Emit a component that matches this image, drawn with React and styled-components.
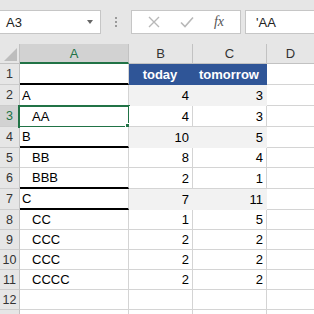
import React from "react";
import styled, { createGlobalStyle } from "styled-components";

const Global = createGlobalStyle`
  body {
    margin: 0;
    background: #ffffff;
    font-family: "Liberation Sans", Arial, sans-serif;
  }
`;

const Page = styled.div`
  width: 314px;
  height: 314px;
  overflow: hidden;
`;

// formula bar at the top
const Toolbar = styled.div`
  height: 44px;
  background: #e6e6e6;
  display: flex;
  align-items: flex-start;
  padding-top: 10px;
  box-sizing: border-box;
`;

const Box = styled.div`
  height: 24px;
  box-sizing: border-box;
  background: #ffffff;
  border: 1px solid #c6c6c6;
  display: flex;
  align-items: center;
`;

const NameBox = styled(Box)`
  width: 101px;
  border-left: none;
  padding-left: 6px;
  font-size: 13px;
  color: #222;
  justify-content: space-between;
  padding-right: 7px;
`;

const Caret = styled.span`
  width: 0;
  height: 0;
  border-left: 3.5px solid transparent;
  border-right: 3.5px solid transparent;
  border-top: 4px solid #666;
`;

const Dots = styled.div`
  width: 30px;
  height: 24px;
  display: flex;
  flex-direction: column;
  align-items: center;
  justify-content: center;
  gap: 2px;
  & span {
    width: 2px;
    height: 2px;
    background: #9a9a9a;
  }
`;

const Buttons = styled(Box)`
  width: 110px;
  justify-content: space-around;
  padding: 0 6px;
  color: #b8b8b8;
`;

const Fx = styled.span`
  font-family: "Liberation Serif", "Times New Roman", serif;
  font-style: italic;
  font-size: 14px;
  color: #555;
`;

const Formula = styled(Box)`
  margin-left: 4px;
  flex: 1;
  border-right: none;
  padding-left: 10px;
  font-size: 13px;
  color: #222;
`;

// sheet grid
const Grid = styled.div`
  display: grid;
  grid-template-columns: 20px 109px 64px 74px 48px;
`;

const HeadCell = styled.div`
  height: 20px;
  box-sizing: border-box;
  background: ${(p) => (p.$active ? "#d2d2d2" : "#e6e6e6")};
  border-right: 1px solid #c2c2c2;
  border-bottom: ${(p) => (p.$active ? "2px solid #217346" : "1px solid #c2c2c2")};
  display: flex;
  align-items: center;
  justify-content: center;
  font-size: 13px;
  color: ${(p) => (p.$active ? "#217346" : "#333")};
  padding-top: ${(p) => (p.$active ? "1px" : "0")};
`;

const Corner = styled(HeadCell)`
  position: relative;
  &::after {
    content: "";
    position: absolute;
    right: 2px;
    bottom: 2px;
    border-left: 13px solid transparent;
    border-bottom: 13px solid #bdbdbd;
  }
`;

const RowNum = styled.div`
  height: ${(p) => p.$h}px;
  box-sizing: border-box;
  background: ${(p) => (p.$active ? "#d2d2d2" : "#e6e6e6")};
  border-right: 1px solid #c2c2c2;
  border-bottom: 1px solid #cdcdcd;
  display: flex;
  align-items: center;
  justify-content: center;
  font-size: 12.5px;
  color: ${(p) => (p.$active ? "#217346" : "#333")};
`;

const Cell = styled.div`
  position: relative;
  height: ${(p) => p.$h}px;
  box-sizing: border-box;
  background: ${(p) => (p.$blue ? "#2f5597" : p.$shade ? "#f2f2f2" : "#ffffff")};
  border-right: 1px solid ${(p) => (p.$blue ? "#2f5597" : p.$shade ? "#f2f2f2" : "#d4d4d4")};
  border-bottom: ${(p) => (p.$thick ? "2px solid #000" : `1px solid ${p.$blue ? "#2f5597" : p.$shade ? "#f2f2f2" : "#d4d4d4"}`)};
  display: flex;
  align-items: center;
  justify-content: ${(p) => (p.$num ? "flex-end" : p.$blue ? "center" : "flex-start")};
  padding: 0 3px 0 ${(p) => (p.$indent ? 12 : 2)}px;
  font-size: 13px;
  font-weight: ${(p) => (p.$blue ? 700 : 400)};
  color: ${(p) => (p.$blue ? "#ffffff" : "#000")};
  white-space: nowrap;
  overflow: visible;
`;

const Selection = styled.div`
  position: absolute;
  left: -2px;
  top: -1px;
  right: -2px;
  bottom: -2px;
  border: 2px solid #217346;
  pointer-events: none;
  &::after {
    content: "";
    position: absolute;
    right: -4px;
    bottom: -4px;
    width: 5px;
    height: 5px;
    background: #217346;
    border: 1px solid #fff;
  }
`;

const rows = [
  { n: 1, h: 21, label: "", thick: true, head: true },
  { n: 2, h: 21, label: "A", b: 4, c: 3, shade: true },
  { n: 3, h: 21, label: "AA", b: 4, c: 3, indent: true, sel: true },
  { n: 4, h: 21, label: "B", b: 10, c: 5, shade: true, thick: true },
  { n: 5, h: 20, label: "BB", b: 8, c: 4, indent: true },
  { n: 6, h: 21, label: "BBB", b: 2, c: 1, indent: true, thick: true },
  { n: 7, h: 21, label: "C", b: 7, c: 11, shade: true, thick: true },
  { n: 8, h: 20, label: "CC", b: 1, c: 5, indent: true },
  { n: 9, h: 20, label: "CCC", b: 2, c: 2, indent: true },
  { n: 10, h: 20, label: "CCC", b: 2, c: 2, indent: true },
  { n: 11, h: 20, label: "CCCC", b: 2, c: 2, indent: true },
  { n: 12, h: 20, label: "" },
  { n: 13, h: 20, label: "" },
];

export default function App() {
  return (
    <Page>
      <Global />
      <Toolbar>
        <NameBox>
          A3
          <Caret />
        </NameBox>
        <Dots>
          <span />
          <span />
          <span />
        </Dots>
        <Buttons>
          <svg width="12" height="12" viewBox="0 0 12 12">
            <path d="M1 1 L11 11 M11 1 L1 11" stroke="#b8b8b8" strokeWidth="1.4" />
          </svg>
          <svg width="14" height="12" viewBox="0 0 14 12">
            <path d="M1 6.5 L5 10.5 L13 1.5" stroke="#b8b8b8" strokeWidth="1.6" fill="none" />
          </svg>
          <Fx>fx</Fx>
        </Buttons>
        <Formula>'AA</Formula>
      </Toolbar>
      <Grid>
        <Corner />
        <HeadCell $active>A</HeadCell>
        <HeadCell>B</HeadCell>
        <HeadCell>C</HeadCell>
        <HeadCell>D</HeadCell>
        {rows.map((r) => (
          <React.Fragment key={r.n}>
            <RowNum $h={r.h} $active={r.sel}>
              {r.n === 13 ? "" : r.n}
            </RowNum>
            <Cell $h={r.h} $thick={r.thick} $indent={r.indent}>
              {r.label}
              {r.sel && <Selection />}
            </Cell>
            <Cell $h={r.h} $num={!r.head} $blue={r.head} $shade={r.shade}>
              {r.head ? "today" : r.b}
            </Cell>
            <Cell $h={r.h} $num={!r.head} $blue={r.head} $shade={r.shade}>
              {r.head ? "tomorrow" : r.c}
            </Cell>
            <Cell $h={r.h} />
          </React.Fragment>
        ))}
      </Grid>
    </Page>
  );
}
